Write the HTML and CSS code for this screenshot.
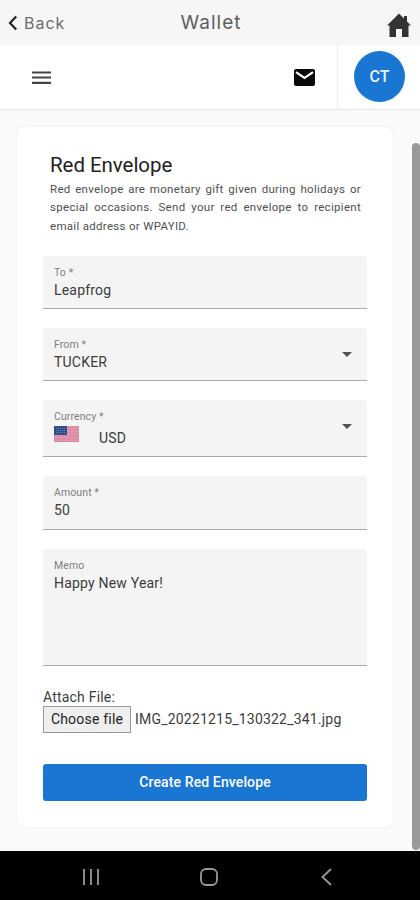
FILE: index.html
```html
<!DOCTYPE html>
<html lang="en">
<head>
    <meta charset="UTF-8">
    <meta name="viewport" content="width=device-width, initial-scale=1.0">
    <title>Wallet</title>
    <link rel="stylesheet" href="styles.css">
</head>
<body>
    <div class="titlebar">
        <a class="back">
            <svg width="10" height="16" viewBox="0 0 10 16"><path d="M8.2 1.5 2 8l6.2 6.5" fill="none" stroke="#222" stroke-width="2.2"/></svg>
            <span>Back</span>
        </a>
        <h1>Wallet</h1>
        <svg class="home" width="24" height="24" viewBox="0 0 24 24"><path d="M12 .5 0 12.500h2.500V24H9v-8h6v8h6.500V12.500H24l-4-4V3h-3v2.500z" fill="#333"/></svg>
    </div>
    <div class="toolbar">
        <svg class="menu" width="19" height="14" viewBox="0 0 19 14"><path d="M0 1.500h19M0 6.500h19M0 11.800h19" stroke="#444" stroke-width="2.2"/></svg>
        <svg class="mail" width="21" height="17" viewBox="0 0 21 17"><rect width="21" height="17" rx="2" fill="#0a0a0a"/><path d="M2 3.2 10.5 9 19 3.2" fill="none" stroke="#fff" stroke-width="2.2"/></svg>
        <div class="account">
            <div class="avatar">CT</div>
        </div>
    </div>
    <div class="content">
        <div class="card">
            <h2>Red Envelope</h2>
            <p>Red envelope are monetary gift given during holidays or special occasions. Send your red envelope to recipient email address or WPAYID.</p>
            <div class="fields">
                <div class="field">
                    <label>To *</label>
                    <div class="value">Leapfrog</div>
                </div>
                <div class="field select">
                    <label>From *</label>
                    <div class="value">TUCKER</div>
                </div>
                <div class="field select currency">
                    <label>Currency *</label>
                    <div class="value">
                        <svg width="25" height="16" viewBox="0 0 25 16">
                            <rect width="25" height="16" fill="#e299ae"/>
                            <path d="M0 1h25M0 4h25M0 7h25M0 10h25M0 13h25M0 15.5h25" stroke="#d9829b" stroke-width="1"/>
                            <rect width="13" height="9" fill="#2f4f8c"/>
                            <path d="M2 2.5h9M2 4.5h9M2 6.5h9" stroke="#6f8dbb" stroke-width=".8" stroke-dasharray="1 1"/>
                        </svg>
                        <span>USD</span>
                    </div>
                </div>
                <div class="field">
                    <label>Amount *</label>
                    <div class="value">50</div>
                </div>
                <div class="field memo">
                    <label>Memo</label>
                    <div class="value">Happy New Year!</div>
                </div>
            </div>
            <div class="attach">
                <label>Attach File:</label>
                <div class="file">
                    <span class="choose">Choose file</span>
                    <span class="filename">IMG_20221215_130322_341.jpg</span>
                </div>
            </div>
            <button class="submit">Create Red Envelope</button>
        </div>
        <div class="scrollbar"></div>
    </div>
    <div class="navbar">
        <svg width="18" height="18" viewBox="0 0 18 18"><path d="M2 1v16M9 1v16M16 1v16" stroke="#999" stroke-width="1.8"/></svg>
        <svg width="18" height="18" viewBox="0 0 18 18"><rect x="1" y="1" width="16" height="16" rx="5" fill="none" stroke="#999" stroke-width="1.8"/></svg>
        <svg width="18" height="18" viewBox="0 0 18 18"><path d="M13 1 4.5 9l8.5 8" fill="none" stroke="#999" stroke-width="1.8"/></svg>
    </div>
</body>
</html>
```
FILE: styles.css
```css
* {
    box-sizing: border-box;
}
body {
    margin: 0;
    width: 420px;
    height: 900px;
    display: flex;
    flex-direction: column;
    font-family: Roboto, sans-serif;
    color: #3c3c3c;
    background-color: #fafafa;
    overflow: hidden;
}
svg {
    display: block;
    flex: none;
}
.titlebar {
    height: 45px;
    display: grid;
    grid-template-columns: 1fr auto 1fr;
    align-items: center;
    padding: 0 9px 0 8px;
    background-color: #f6f6f6;
    font-family: Inter, sans-serif;
    color: #6c6c6c;
}
.back {
    display: flex;
    align-items: center;
    gap: 6px;
    font-size: 16px;
    letter-spacing: 1px;
}
.titlebar h1 {
    margin: 0 -3px 0 0;
    font-size: 19px;
    font-weight: 400;
    letter-spacing: 1px;
    color: #606060;
}
.home {
    justify-self: end;
    margin-top: 5px;
}
.toolbar {
    height: 65px;
    display: flex;
    align-items: center;
    padding-left: 32px;
    background-color: #fff;
    border-bottom: 1px solid #e6e6e6;
}
.menu {
    margin-top: 2px;
}
.mail {
    margin-top: 1px;
    margin-left: auto;
    margin-right: 22px;
}
.account {
    width: 83px;
    height: 100%;
    padding: 6px 0 0 16px;
    border-left: 1px solid #eee;
}
.avatar {
    width: 51px;
    height: 51px;
    border-radius: 50%;
    background-color: #1976d2;
    color: #e8f2fc;
    font-size: 16px;
    font-weight: 500;
    line-height: 51px;
    text-align: center;
}
.content {
    flex: 1;
    display: flex;
    justify-content: space-between;
    padding: 17px 0 0 17px;
}
.card {
    width: 376px;
    height: 700px;
    padding: 26px 26px 0;
    background-color: #fff;
    border-radius: 8px;
    box-shadow: 0 0 3px rgba(0, 0, 0, 0.06);
}
.card h2 {
    margin: 0 0 3px 7px;
    font-size: 20.5px;
    font-weight: 400;
    line-height: 24px;
    letter-spacing: -0.05px;
    color: #222;
}
.card p {
    margin: 0 6px 21px 7px;
    font-size: 11.5px;
    line-height: 18.3px;
    letter-spacing: 0.3px;
    text-align: justify;
    color: #505050;
}
.fields {
    display: flex;
    flex-direction: column;
    gap: 19px;
}
.field {
    position: relative;
    height: 53.3px;
    padding: 10px 11px 0;
    background-color: #f4f4f4;
    border-bottom: 1.5px solid #aaa;
    border-radius: 4px 4px 0 0;
}
.field label {
    display: block;
    font-size: 10.5px;
    line-height: 13px;
    letter-spacing: 0.1px;
    color: #808080;
}
.value {
    display: flex;
    font-size: 14px;
    line-height: 22px;
    letter-spacing: 0.2px;
}
.select::after {
    content: "";
    position: absolute;
    right: 15px;
    top: 24px;
    border: 5px solid transparent;
    border-top-color: #555;
    border-bottom: 0;
}
.currency {
    height: 57px;
}
.currency .value {
    gap: 20px;
}
.currency svg {
    margin-top: 3px;
}
.currency span {
    padding-top: 4px;
}
.memo {
    height: 117px;
}
.attach {
    margin-top: 22px;
    font-size: 14px;
}
.attach label {
    display: block;
    line-height: 18px;
    letter-spacing: 0.2px;
}
.file {
    display: flex;
    align-items: center;
    gap: 4px;
}
.choose {
    width: 88px;
    height: 27px;
    border: 1px solid #999;
    background-color: #efefef;
    line-height: 25px;
    letter-spacing: 0.2px;
    text-align: center;
    color: #222;
}
.filename {
    letter-spacing: 0.2px;
}
.submit {
    display: block;
    width: 100%;
    height: 37px;
    margin-top: 31px;
    border: 0;
    border-radius: 3px;
    background-color: #1976d2;
    color: #fff;
    font-family: inherit;
    font-size: 14px;
    font-weight: 500;
    letter-spacing: 0.12px;
}
.scrollbar {
    width: 8px;
    height: 707px;
    margin-top: 16px;
    border-radius: 4px;
    background-color: #999;
}
.navbar {
    height: 49px;
    display: flex;
    align-items: center;
    justify-content: center;
    gap: 100px;
    padding: 3px 2px 0 0;
    background-color: #000;
}
```
